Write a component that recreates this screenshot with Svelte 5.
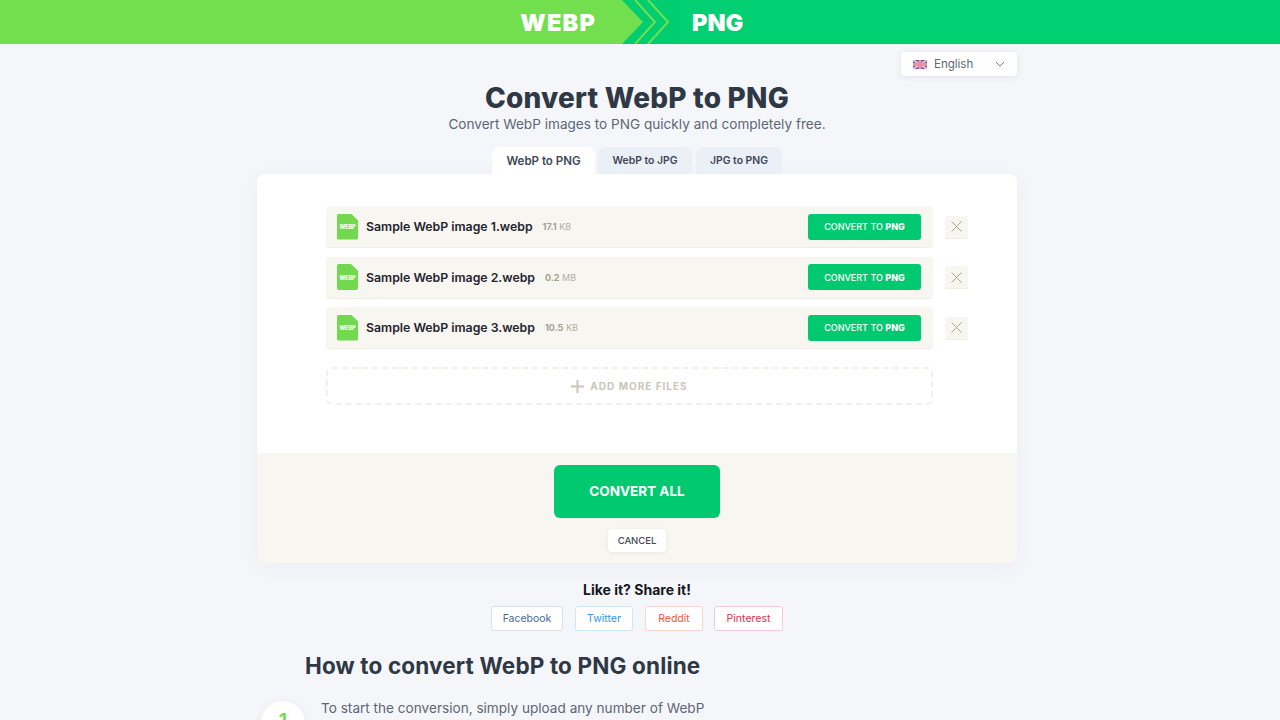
<script>
  const files = [
    { name: "Sample WebP image 1.webp", size: "17.1", unit: "KB" },
    { name: "Sample WebP image 2.webp", size: "0.2", unit: "MB" },
    { name: "Sample WebP image 3.webp", size: "10.5", unit: "KB" }
  ];
  const tabs = ["WebP to PNG", "WebP to JPG", "JPG to PNG"];
  const shares = [
    { label: "Facebook", cls: "fb" },
    { label: "Twitter", cls: "tw" },
    { label: "Reddit", cls: "rd" },
    { label: "Pinterest", cls: "pt" }
  ];
</script>

<div class="page">
  <header class="top">
    <div class="fmt from">WEBP</div>
    <svg class="arrow" width="60" height="44" viewBox="0 0 60 44">
      <rect width="60" height="44" fill="#00cc70" />
      <path d="M0 0H1L22 22L1 44H0Z" fill="#72e04e" />
      <path d="M14 0L34 22L14 44M27 0L47 22L27 44" fill="none" stroke="#72e04e" stroke-width="2" />
    </svg>
    <div class="fmt to">PNG</div>
  </header>

  <div class="lang-row">
    <div class="lang">
      <svg width="14" height="9" viewBox="0 0 14 9">
        <rect width="14" height="9" fill="#5a5f9a" />
        <path d="M0 0L14 9M14 0L0 9" stroke="#f0b8c8" stroke-width="2" />
        <path d="M7 0V9M0 4.500H14" stroke="#ee8fa8" stroke-width="3" />
      </svg>
      <span class="lang-name">English</span>
      <svg class="caret" width="10" height="6" viewBox="0 0 10 6">
        <path d="M1 1L5 5L9 1" fill="none" stroke="#7b8494" stroke-width="1" />
      </svg>
    </div>
  </div>

  <main class="wrap">
    <h1>Convert WebP to PNG</h1>
    <p class="sub">Convert WebP images to PNG quickly and completely free.</p>

    <nav class="tabs">
      {#each tabs as tab, i}
        <div class="tab" class:active={i === 0}>{tab}</div>
      {/each}
    </nav>

    <section class="card">
      <div class="list">
        {#each files as file}
          <div class="line">
            <div class="row">
              <div class="file-icon"><span>WEBP</span></div>
              <span class="name">{file.name}</span>
              <span class="size"><b>{file.size}</b> {file.unit}</span>
              <button class="convert">CONVERT TO <b>PNG</b></button>
            </div>
            <button class="remove" aria-label="Remove">
              <svg width="11" height="11" viewBox="0 0 11 11">
                <path d="M.5 .5L10.500 10.500M10.500 .5L.5 10.500" stroke="#a8a498" stroke-width="1" />
              </svg>
            </button>
          </div>
        {/each}
        <div class="add">
          <svg width="13" height="13" viewBox="0 0 13 13">
            <path d="M6.500 0V13M0 6.500H13" stroke="#c9c6bb" stroke-width="2" />
          </svg>
          ADD MORE FILES
        </div>
      </div>
      <div class="foot">
        <button class="all">CONVERT ALL</button>
        <button class="cancel">CANCEL</button>
      </div>
    </section>

    <div class="share">
      <div class="share-title">Like it? Share it!</div>
      <div class="share-btns">
        {#each shares as s}
          <a class="sbtn {s.cls}" href="#top">{s.label}</a>
        {/each}
      </div>
    </div>

    <section class="how">
      <h2>How to convert WebP to PNG online</h2>
      <div class="step">
        <div class="num">1</div>
        <p>To start the conversion, simply upload any number of WebP</p>
      </div>
    </section>
  </main>
</div>

<style>
  :global(body) {
    margin: 0;
    background: #f5f6fa;
    font-family: Inter, "Liberation Sans", sans-serif;
    overflow: hidden;
  }
  .page {
    height: 720px;
    overflow: hidden;
  }
  button {
    font-family: inherit;
    border: none;
    cursor: pointer;
  }

  .top {
    display: flex;
    height: 44px;
  }
  .arrow {
    flex: none;
  }
  .fmt {
    display: flex;
    align-items: center;
    color: #fff;
    font-weight: 900;
    font-size: 23.500px;
  }
  .from {
    width: 621px;
    background: #72e04e;
    justify-content: flex-end;
    padding-right: 25px;
    box-sizing: border-box;
    letter-spacing: 1.200px;
  }
  .to {
    flex: 1;
    background: #00cf72;
    padding-left: 11px;
  }

  .lang-row {
    width: 760px;
    margin: 8px auto 0 257px;
    display: flex;
    justify-content: flex-end;
  }
  .lang {
    width: 116px;
    height: 24px;
    box-sizing: border-box;
    padding: 0 12px 0 12px;
    display: flex;
    align-items: center;
    background: #fff;
    border-radius: 4px;
    box-shadow: 0 1px 6px rgba(60, 70, 100, 0.1);
  }
  .lang-name {
    margin-left: 7px;
    font-size: 11.500px;
    color: #5d6675;
  }
  .caret {
    margin-left: auto;
  }

  .wrap {
    width: 760px;
    margin-left: 257px;
  }
  h1 {
    margin: 6px 0 0;
    text-align: center;
    font-size: 28px;
    line-height: 32px;
    font-weight: 800;
    letter-spacing: 0.2px;
    color: #2f3845;
  }
  .sub {
    margin: 0;
    text-align: center;
    font-size: 13.600px;
    line-height: 20px;
    color: #5d6675;
  }

  .tabs {
    display: flex;
    margin: 13px 0 0 235px;
    gap: 3px;
  }
  .tab {
    height: 27px;
    display: flex;
    align-items: center;
    justify-content: center;
    font-size: 10.400px;
    font-weight: 600;
    color: #3f4856;
    background: #ebeff6;
    border-radius: 8px 8px 0 0;
    width: 90px;
  }
  .tab:nth-child(2) {
    width: 94px;
  }
  .tab:nth-child(3) {
    width: 86px;
    margin-left: 1px;
  }
  .tab.active {
    width: 103px;
    background: #fff;
    font-size: 11.500px;
  }

  .card {
    background: #fff;
    border-radius: 8px;
    overflow: hidden;
    box-shadow: 0 4px 20px rgba(60, 70, 100, 0.05);
  }
  .list {
    height: 279px;
    box-sizing: border-box;
    padding: 32px 0 0 69px;
  }
  .line {
    display: flex;
    align-items: center;
    gap: 12px;
    margin-bottom: 8.500px;
  }
  .row {
    width: 607px;
    height: 42px;
    box-sizing: border-box;
    padding: 0 12px 0 11px;
    display: flex;
    align-items: center;
    background: #f8f6f1;
    border-radius: 4px;
    border-bottom: 1px solid #f0ede5;
  }
  .file-icon {
    width: 21px;
    height: 26px;
    background: #72d94e;
    border-radius: 2px;
    clip-path: polygon(0 0, 66% 0, 100% 26%, 100% 100%, 0 100%);
    display: flex;
    align-items: center;
    justify-content: center;
    padding-top: 1px;
    box-sizing: border-box;
  }
  .file-icon span {
    color: #fff;
    font-size: 5.500px;
    font-weight: 800;
    letter-spacing: -0.1px;
  }
  .name {
    margin-left: 8px;
    font-size: 12.300px;
    font-weight: 600;
    color: #1f2430;
  }
  .size {
    margin-left: 10px;
    font-size: 9px;
    color: #b2aea3;
  }
  .size b {
    font-weight: 700;
    color: #a39f94;
  }
  .convert {
    margin-left: auto;
    width: 113px;
    height: 26px;
    padding: 0;
    border-radius: 3px;
    background: #00c96f;
    color: #fff;
    font-size: 9px;
    font-weight: 500;
  }
  .convert b {
    font-weight: 800;
  }
  .remove {
    width: 23px;
    height: 23px;
    padding: 0;
    display: flex;
    align-items: center;
    justify-content: center;
    background: #f8f6f1;
    border-bottom: 1px solid #f0ede5;
    border-radius: 2px;
  }
  .add {
    width: 607px;
    height: 38px;
    box-sizing: border-box;
    margin-top: 18px;
    border: 2px dashed #f2f0ea;
    border-radius: 6px;
    display: flex;
    align-items: center;
    justify-content: center;
    gap: 6px;
    font-size: 10px;
    font-weight: 700;
    letter-spacing: 1px;
    color: #c9c6bb;
  }

  .foot {
    height: 110px;
    box-sizing: border-box;
    padding-top: 12px;
    background: #f8f6f1;
    display: flex;
    flex-direction: column;
    align-items: center;
  }
  .all {
    width: 166px;
    height: 53px;
    flex: none;
    padding: 0 0 2px;
    border-radius: 6px;
    background: #00c96f;
    color: #fff;
    font-size: 13.500px;
    font-weight: 700;
  }
  .cancel {
    margin-top: 11px;
    width: 58px;
    height: 23px;
    flex: none;
    padding: 0;
    background: #fff;
    border-radius: 4px;
    font-size: 9.500px;
    font-weight: 500;
    color: #3f4856;
    box-shadow: 0 1px 4px rgba(60, 60, 40, 0.08);
  }

  .share {
    display: flex;
    flex-direction: column;
    align-items: center;
  }
  .share-title {
    margin-top: 18px;
    font-size: 14px;
    line-height: 18px;
    font-weight: 700;
    color: #14181f;
  }
  .share-btns {
    display: flex;
    margin-top: 7px;
    gap: 12px;
  }
  .sbtn {
    height: 25px;
    box-sizing: border-box;
    display: flex;
    align-items: center;
    justify-content: center;
    background: #fff;
    border: 1px solid;
    border-radius: 3px;
    font-size: 10.500px;
    text-decoration: none;
  }
  .fb {
    width: 72px;
    color: #4a6a96;
    border-color: #d9dfe9;
  }
  .tw {
    width: 58px;
    color: #2f98e0;
    border-color: #cfe6f7;
  }
  .rd {
    width: 58px;
    color: #f0553a;
    border-color: #f8d5ce;
  }
  .pt {
    width: 69px;
    margin-left: -1px;
    color: #e0304a;
    border-color: #f6ccd3;
  }

  .how h2 {
    margin: 21px 0 0 48px;
    font-size: 22.500px;
    line-height: 28px;
    font-weight: 700;
    letter-spacing: 0.15px;
    color: #2f3845;
  }
  .step {
    display: flex;
    margin: 21px 0 0 4px;
  }
  .num {
    width: 44px;
    height: 44px;
    flex: none;
    border-radius: 50%;
    background: #fff;
    color: #72d94e;
    font-size: 20px;
    font-weight: 600;
    text-align: center;
    line-height: 40px;
    box-shadow: 0 2px 10px rgba(60, 70, 100, 0.08);
  }
  .step p {
    margin: -3px 0 0 16px;
    font-size: 13.600px;
    line-height: 20px;
    color: #5d6675;
    width: 400px;
  }
</style>
